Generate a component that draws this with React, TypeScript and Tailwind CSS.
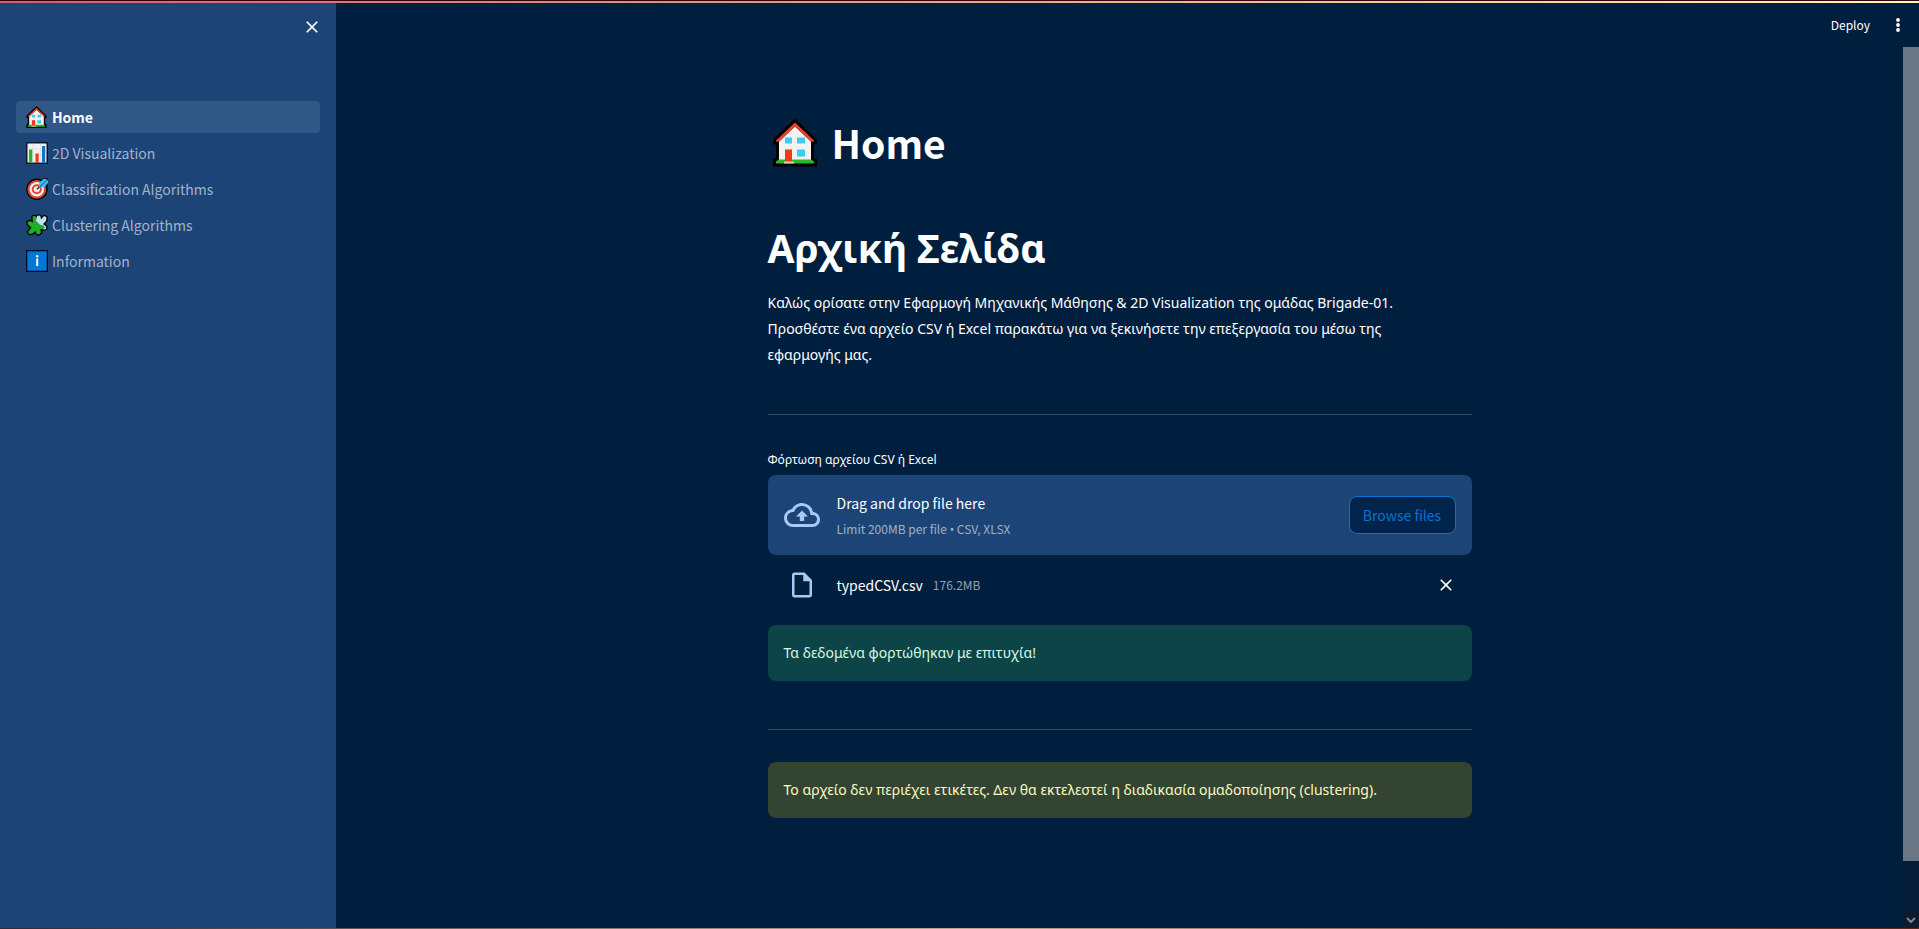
import type { ReactNode } from 'react';

const greek = 'font-["Noto_Sans","Open_Sans",sans-serif]';

function HouseIcon({ className }: { className: string }) {
  return (
    <svg viewBox="0 0 44 48" className={className} aria-hidden="true">
      <path d="M22 0 0 21v5h3v14H0v8h44v-8h-3V26h3v-5z" fill="#000" />
      <path d="M22 8 6 23v20h32V23z" fill="#f2f2f2" />
      <path d="M22 4 3 22v1h3L22 8l16 15h3v-1z" fill="#e6432e" />
      <path d="M3 45v-2l3-2h32l3 2v2z" fill="#2bb92b" />
      <path d="M12 31h7v12h-7z" fill="#ee3a1c" />
      <path d="M11 43h10v2H11z" fill="#d5cfc4" />
      <path d="M12 19h7v6h-7zM24 19h8v6h-8zM24 31h8v7h-8z" fill="#39cdf2" />
    </svg>
  );
}

function ChartIcon() {
  return (
    <svg viewBox="0 0 22 22" className="size-[22px]" aria-hidden="true">
      <path d="M0 0h22v22H0z" fill="#0c1626" />
      <path d="M1.5 1.5h19v19h-19z" fill="#f2f2f2" />
      <path d="M7 1.5v19M14.5 1.5v19M1.5 7h19M1.5 13h19" stroke="#d9d9de" strokeWidth=".7" />
      <path d="M3 7.5h3.300v13H3z" fill="#25b825" />
      <path d="M9.500 11.500h3.200v9H9.500z" fill="#e63c24" />
      <path d="M16 4h3.200v16.500H16z" fill="#1473cf" />
    </svg>
  );
}

function TargetIcon() {
  return (
    <svg viewBox="0 0 22 22" className="size-[22px]" aria-hidden="true">
      <circle cx="11" cy="11.3" r="10.7" fill="#000" />
      <path d="M12 6 17.500 0H21l1 1v7l-5 4z" fill="#061a2e" />
      <circle cx="10.800" cy="11.3" r="9.4" fill="#e2452d" />
      <circle cx="10.800" cy="11.3" r="7.2" fill="#f4f4f4" />
      <circle cx="10.800" cy="11.3" r="5" fill="#e2452d" />
      <circle cx="10.800" cy="11.3" r="3" fill="#f4f4f4" />
      <path d="M10.800 11.300 14.500 8" stroke="#333" strokeWidth="1.500" />
      <path d="M13 9.500V5.500L17.500 1h3v1.500H22V5l-4.500 4.500z" fill="#35c4f3" />
      <path d="M13.500 9 20 3" stroke="#1b77c9" strokeWidth="1.200" />
    </svg>
  );
}

const puzzleBack = 'M11 2.500a2 2 0 0 1 3.500 0l.5 3 2.500-3a2 2 0 0 1 3 1.500l-.5 3-3 3 3 2.500a2 2 0 0 1-2 3l-4-2-5-6z';
const puzzleFront =
  'M6.500 2.500 9 1.800l1.500 2-.5 3 4 4 3.500.7 1.500 2.500-2 1.500-3-.5 1 3.500-2 2-2.500-.8-1-3-3 2.800-3 .5-1.500-2 3.500-4.500L2 10.500l-.5-2.500L4 7l3 1.500z';

function PuzzleIcon() {
  return (
    <svg viewBox="0 0 22 22" className="size-[22px]" aria-hidden="true">
      <path d={puzzleBack} fill="#000" stroke="#000" strokeWidth="2.600" strokeLinejoin="round" />
      <path d={puzzleFront} fill="#000" stroke="#000" strokeWidth="2.600" strokeLinejoin="round" />
      <path d={puzzleBack} fill="#bfe3f2" />
      <path d={puzzleFront} fill="#1fae27" />
    </svg>
  );
}

function InfoIcon() {
  return (
    <svg viewBox="0 0 22 22" className="size-[22px]" aria-hidden="true">
      <path d="M0 0h22v22H0z" fill="#020d24" />
      <path d="M1.300 1.300h19.400v19.400H1.300z" fill="#0078d7" />
      <path d="M10.200 8.500h2v7.500h-2z" fill="#fff" />
      <circle cx="11.200" cy="6.300" r="1.200" fill="#fff" />
    </svg>
  );
}

function CloseIcon() {
  return (
    <svg viewBox="0 0 24 24" className="size-5" fill="currentColor" aria-hidden="true">
      <path d="M19 6.410 17.590 5 12 10.590 6.410 5 5 6.410 10.590 12 5 17.590 6.410 19 12 13.410 17.590 19 19 17.590 13.410 12z" />
    </svg>
  );
}

function NavItem({ icon, label, active = false }: { icon: ReactNode; label: string; active?: boolean }) {
  return (
    <a
      href="#"
      aria-current={active ? 'page' : undefined}
      className={`flex h-8 items-center gap-1 rounded pl-[10px] text-sm ${
        active ? 'bg-[#315786] font-bold text-white' : 'text-[#a2b3ca]'
      }`}
    >
      <span className="flex w-[22px] shrink-0">{icon}</span>
      {label}
    </a>
  );
}

export default function App() {
  return (
    <div className='flex min-h-screen flex-col bg-[#001f3f] font-["Noto_Sans_CJK_SC","Noto_Sans",sans-serif] text-white'>
      <div className="h-[3px] border-t border-[#36000c] bg-linear-to-r from-[#c9656f] via-[#e0a890] to-[#fbf9b0]" />

      <div className="flex flex-1">
        <aside className="w-[336px] shrink-0 bg-[#1c4477] px-4">
          <div className="flex h-[98px] items-start justify-end pt-[14px]">
            <button type="button" aria-label="Close sidebar" className="mr-[-2px]">
              <CloseIcon />
            </button>
          </div>
          <nav className="flex flex-col gap-1">
            <NavItem icon={<HouseIcon className="h-[22px] w-[21px]" />} label="Home" active />
            <NavItem icon={<ChartIcon />} label="2D Visualization" />
            <NavItem icon={<TargetIcon />} label="Classification Algorithms" />
            <NavItem icon={<PuzzleIcon />} label="Clustering Algorithms" />
            <NavItem icon={<InfoIcon />} label="Information" />
          </nav>
        </aside>

        <div className="flex flex-1 flex-col">
          <header className="flex h-11 items-center justify-end gap-[18px] pr-[11px]">
            <button type="button" className="text-xs">Deploy</button>
            <button type="button" aria-label="Menu">
              <svg viewBox="0 0 20 20" className="size-5" fill="currentColor" aria-hidden="true">
                <circle cx="10" cy="5" r="1.900" />
                <circle cx="10" cy="10" r="1.900" />
                <circle cx="10" cy="15" r="1.900" />
              </svg>
            </button>
          </header>

          <div className="flex flex-1">
            <main className="flex-1 px-4">
              <div className="mx-auto max-w-[704px] pt-[68px]">
                <h1 className="flex h-[55px] items-center text-[39px] leading-none font-bold">
                  <HouseIcon className="mr-[15px] ml-[5px] h-[49px] w-11" />
                  Home
                </h1>
                <h1 className={`mt-[51px] text-[39px] leading-[53px] font-bold ${greek}`}>Αρχική Σελίδα</h1>
                <p className={`mt-4 text-sm leading-[26px] ${greek}`}>
                  Καλώς ορίσατε στην Εφαρμογή Μηχανικής Μάθησης &amp; 2D Visualization της ομάδας Brigade-01.
                  <br />
                  Προσθέστε ένα αρχείο CSV ή Excel παρακάτω για να ξεκινήσετε την επεξεργασία του μέσω της
                  <br />
                  εφαρμογής μας.
                </p>
                <hr className="mt-[46px] border-[#334c65]" />

                <label htmlFor="upload" className={`mt-8 block text-xs leading-[26px] ${greek}`}>
                  Φόρτωση αρχείου CSV ή Excel
                </label>
                <input id="upload" type="file" accept=".csv,.xlsx" className="sr-only" />
                <section className="mt-[2px] flex h-20 items-center rounded-lg bg-[#1c4477] px-4">
                  <svg viewBox="0 0 24 24" className="mr-[17px] size-9" fill="#a9c9f5" aria-hidden="true">
                    <path d="M19.350 10.040A7.490 7.490 0 0 0 12 4C9.110 4 6.600 5.640 5.350 8.040A5.994 5.994 0 0 0 0 14c0 3.310 2.690 6 6 6h13c2.760 0 5-2.240 5-5 0-2.640-2.050-4.780-4.650-4.960zM19 18H6c-2.210 0-4-1.790-4-4 0-2.050 1.530-3.760 3.560-3.970l1.070-.11.5-.95A5.469 5.469 0 0 1 12 6c2.620 0 4.880 1.860 5.390 4.430l.3 1.500 1.530.11A2.980 2.980 0 0 1 22 15c0 1.650-1.350 3-3 3zM8 13h2.550v3h2.900v-3H16l-4-4-4 4z" />
                  </svg>
                  <div className="flex-1 pt-[2px]">
                    <p className="text-sm leading-[26px]">Drag and drop file here</p>
                    <p className="text-xs leading-[26px] text-[#a0b0c8]">
                      Limit 200MB per file <span className={greek}>•</span> CSV, XLSX
                    </p>
                  </div>
                  <button
                    type="button"
                    className="h-[38px] w-[107px] rounded-lg border border-[#0b74d2] bg-[#00244b] text-sm text-[#0b72d2]"
                  >
                    Browse files
                  </button>
                </section>

                <div className="flex h-[60px] items-center pr-4 pl-[19px]">
                  <svg viewBox="0 0 24 24" className="mr-[20px] size-[30px]" fill="#a9c9f5" aria-hidden="true">
                    <path d="M14 2H6c-1.100 0-1.990.9-1.990 2L4 20c0 1.100.89 2 1.990 2H18c1.100 0 2-.9 2-2V8l-6-6zM6 20V4h7v5h5v11H6z" />
                  </svg>
                  <span className="text-sm">typedCSV.csv</span>
                  <span className="ml-[10px] flex-1 text-xs text-[#93a1b1]">176.2MB</span>
                  <button type="button" aria-label="Remove file">
                    <CloseIcon />
                  </button>
                </div>

                <div role="status" className={`mt-[10px] rounded-lg bg-[#0c4447] px-4 py-[15px] text-sm leading-[26px] text-[#d9f8e4] ${greek}`}>
                  Τα δεδομένα φορτώθηκαν με επιτυχία!
                </div>
                <hr className="mt-12 border-[#334c65]" />
                <div role="alert" className={`mt-8 rounded-lg bg-[#334433] px-4 py-[15px] text-sm leading-[26px] text-[#fbfac0] ${greek}`}>
                  Το αρχείο δεν περιέχει ετικέτες. Δεν θα εκτελεστεί η διαδικασία ομαδοποίησης (clustering).
                </div>
              </div>
            </main>

            <div className="flex w-4 flex-col bg-[#061b35]" aria-hidden="true">
              <div className="grow-[16] bg-[#6b7785]" />
              <div className="grow" />
              <div className="flex h-4 items-center justify-center bg-[#0c1b2d]">
                <svg viewBox="0 0 10 6" className="h-[6px] w-[10px]" fill="none" stroke="#7d8894" strokeWidth="2">
                  <path d="M1 1l4 4 4-4" />
                </svg>
              </div>
            </div>
          </div>
        </div>
      </div>

      <div className="h-px bg-linear-to-r from-[#2c2a3a] via-[#b8a68e] to-[#5a2418]" />
    </div>
  );
}
